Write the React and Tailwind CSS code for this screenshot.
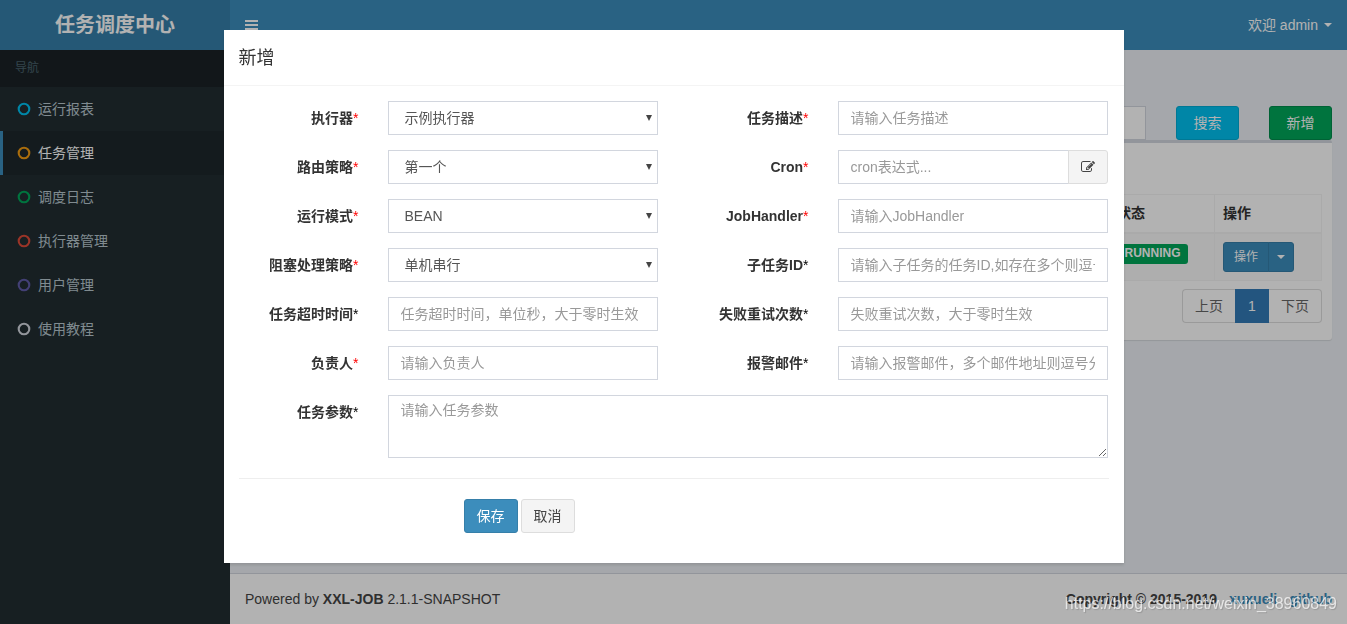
import React from 'react';

const menu = [
  { label: '运行报表', color: 'text-[#00c0ef]' },
  { label: '任务管理', color: 'text-[#f39c12]', active: true },
  { label: '调度日志', color: 'text-[#00a65a]' },
  { label: '执行器管理', color: 'text-[#dd4b39]' },
  { label: '用户管理', color: 'text-[#605ca8]' },
  { label: '使用教程', color: 'text-[#d2d6de]' },
];

const fields = [
  { id: 'jobGroup', label: '执行器', required: true, options: ['示例执行器'] },
  { id: 'jobDesc', label: '任务描述', required: true, placeholder: '请输入任务描述' },
  { id: 'routeStrategy', label: '路由策略', required: true, options: ['第一个'] },
  { id: 'jobCron', label: 'Cron', required: true, placeholder: 'cron表达式...', addon: true },
  { id: 'glueType', label: '运行模式', required: true, options: ['BEAN'] },
  { id: 'handler', label: 'JobHandler', required: true, placeholder: '请输入JobHandler' },
  { id: 'blockStrategy', label: '阻塞处理策略', required: true, options: ['单机串行'] },
  { id: 'childJobId', label: '子任务ID', placeholder: '请输入子任务的任务ID,如存在多个则逗号分隔' },
  { id: 'timeout', label: '任务超时时间', placeholder: '任务超时时间，单位秒，大于零时生效' },
  { id: 'retryCount', label: '失败重试次数', placeholder: '失败重试次数，大于零时生效' },
  { id: 'author', label: '负责人', required: true, placeholder: '请输入负责人' },
  { id: 'alarmEmail', label: '报警邮件', placeholder: '请输入报警邮件，多个邮件地址则逗号分隔' },
];

const controlClass =
  'block h-[34px] w-full min-w-0 rounded-none border border-[#d2d6de] bg-white text-sm text-[#555] outline-none placeholder:text-[#999]';

const CircleIcon = ({ className }) => (
  <svg viewBox="0 0 12 12" className={`h-3 w-3 overflow-visible ${className}`} aria-hidden="true">
    <circle cx="6" cy="6" r="5.3" fill="none" stroke="currentColor" strokeWidth="2.1" />
  </svg>
);

const BarsIcon = () => (
  <svg viewBox="0 0 13 10" className="h-[10px] w-[13px]" fill="currentColor" aria-hidden="true">
    <path d="M0 0h13v2H0zM0 4h13v2H0zM0 8h13v2H0z" />
  </svg>
);

const EditIcon = () => (
  <svg viewBox="0 0 1792 1792" className="h-3.5 w-3.5" fill="currentColor" aria-hidden="true">
    <path d="M888 1184l116-116-152-152-116 116v56h96v96h56zm440-720q-16-16-33 1l-350 350q-17 17-1 33t33-1l350-350q17-17 1-33zm80 594v190q0 119-84.5 203.5t-203.5 84.5h-832q-119 0-203.5-84.5t-84.5-203.5v-832q0-119 84.5-203.5t203.5-84.5h832q63 0 117 25 15 7 18 23 3 17-9 29l-49 49q-14 14-32 8-23-6-45-6h-832q-66 0-113 47t-47 113v832q0 66 47 113t113 47h832q66 0 113-47t47-113v-126q0-13 9-22l64-64q15-15 35-7t20 29zm-96-738l288 288-672 672h-288v-288zm444 132l-92 92-288-288 92-92q28-28 68-28t68 28l152 152q28 28 28 68t-28 68z" />
  </svg>
);

const Caret = () => (
  <svg viewBox="0 0 8 4" className="h-1 w-2" fill="currentColor" aria-hidden="true">
    <path d="M0 0h8L4 4z" />
  </svg>
);

const Star = ({ required }) => (
  <span className={required ? 'font-normal text-[#ff0000]' : 'font-normal text-black'}>*</span>
);

const Control = ({ field }) => {
  if (field.options) {
    return (
      <div className="relative">
        <select id={field.id} className={`${controlClass} appearance-none pl-4 pr-8`}>
          {field.options.map((option) => (
            <option key={option}>{option}</option>
          ))}
        </select>
        <svg
          viewBox="0 0 6 6"
          className="pointer-events-none absolute right-1.5 top-3.5 h-1.5 w-1.5"
          fill="#444"
          aria-hidden="true"
        >
          <path d="M0 0h6L3 6z" />
        </svg>
      </div>
    );
  }
  if (field.addon) {
    return (
      <div className="flex">
        <input id={field.id} type="text" placeholder={field.placeholder} className={`${controlClass} px-3`} />
        <button
          type="button"
          aria-label="编辑Cron"
          className="-ml-px flex h-[34px] w-10 shrink-0 items-center justify-center rounded-r-[3px] border border-[#ddd] bg-[#f4f4f4] text-[#444]"
        >
          <EditIcon />
        </button>
      </div>
    );
  }
  return <input id={field.id} type="text" placeholder={field.placeholder} className={`${controlClass} px-3`} />;
};

const Sidebar = () => (
  <aside className="w-[230px] shrink-0 bg-[#222d32]">
    <div className="bg-[#1a2226] px-[15px] py-2.5 text-xs leading-[17px] text-[#4b646f]">导航</div>
    <nav>
      {menu.map((item) => (
        <a
          key={item.label}
          href="#"
          className={
            item.active
              ? 'flex h-11 items-center gap-2 border-l-3 border-[#3c8dbc] bg-[#1e282c] pl-[15px] text-white'
              : 'flex h-11 items-center gap-2 border-l-3 border-transparent pl-[15px] text-[#b8c7ce]'
          }
        >
          <CircleIcon className={item.color} />
          {item.label}
        </a>
      ))}
    </nav>
  </aside>
);

const JobList = () => (
  <main className="flex-1 px-[15px] pt-14">
    <div className="flex justify-end gap-[30px]">
      <input type="text" aria-label="负责人" className="h-[34px] min-w-0 flex-1 border border-[#d2d6de] bg-white px-3" />
      <button type="button" className="h-[34px] w-[63px] rounded-[3px] border border-[#00acd6] bg-[#00c0ef] text-white">
        搜索
      </button>
      <button type="button" className="h-[34px] w-[63px] rounded-[3px] border border-[#008d4c] bg-[#00a65a] text-white">
        新增
      </button>
    </div>

    <div className="rounded-[3px] border-t-3 border-[#d2d6de] bg-white px-2.5 pb-[17px] pt-[51px] shadow-[0_1px_1px_rgba(0,0,0,0.1)]">
      <table className="w-full table-fixed border-collapse text-left">
        <thead>
          <tr className="h-[38px] text-[#333]">
            <th className="border border-b-2 border-[#f4f4f4]"></th>
            <th className="w-[106px] border border-b-2 border-[#f4f4f4] px-2">状态</th>
            <th className="w-[107px] border border-b-2 border-[#f4f4f4] px-2">操作</th>
          </tr>
        </thead>
        <tbody>
          <tr className="h-12 bg-[#f9f9f9]">
            <td className="border border-[#f4f4f4]"></td>
            <td className="border border-[#f4f4f4] px-2 pt-2.5 align-top">
              <span className="block h-5 w-[71px] rounded-[3px] bg-[#00a65a] text-center text-xs font-bold leading-[18px] text-white">
                RUNNING
              </span>
            </td>
            <td className="border border-[#f4f4f4] px-2">
              <div className="flex h-[30px] text-xs text-white">
                <button type="button" className="w-[46px] rounded-l-[3px] border border-[#367fa9] bg-[#3c8dbc]">
                  操作
                </button>
                <button
                  type="button"
                  aria-label="更多操作"
                  className="-ml-px flex w-[26px] items-center justify-center rounded-r-[3px] border border-[#367fa9] bg-[#3c8dbc]"
                >
                  <Caret />
                </button>
              </div>
            </td>
          </tr>
        </tbody>
      </table>

      <div className="mt-2 flex justify-end text-[#666]">
        <button type="button" className="h-[34px] w-[53px] rounded-l border border-r-0 border-[#ddd]">
          上页
        </button>
        <button type="button" className="h-[34px] w-[34px] bg-[#337ab7] text-white">
          1
        </button>
        <button type="button" className="h-[34px] w-[53px] rounded-r border border-l-0 border-[#ddd]">
          下页
        </button>
      </div>
    </div>
  </main>
);

const AddJobModal = () => (
  <div className="fixed inset-0 overflow-y-auto bg-black/30">
    <div
      role="dialog"
      aria-labelledby="modalTitle"
      className="mx-auto mt-[30px] w-full max-w-[900px] bg-white shadow-[0_2px_3px_rgba(0,0,0,0.125)]"
    >
      <div className="border-b border-[#f4f4f4] px-[15px] pb-3.5 pt-4">
        <h4 id="modalTitle" className="text-lg leading-[25px] text-[#333]">
          新增
        </h4>
      </div>

      <form className="pb-[30px] pt-[15px]">
        <div className="grid grid-cols-12 gap-y-[15px]">
          {fields.map((field) => (
            <React.Fragment key={field.id}>
              <label htmlFor={field.id} className="col-span-2 px-[15px] pt-[7px] text-right font-bold">
                {field.label}
                <Star required={field.required} />
              </label>
              <div className="col-span-4 pl-3.5 pr-4">
                <Control field={field} />
              </div>
            </React.Fragment>
          ))}
          <label htmlFor="executorParam" className="col-span-2 px-[15px] pt-[7px] text-right font-bold">
            任务参数
            <Star />
          </label>
          <div className="col-span-10 pl-3.5 pr-4">
            <textarea
              id="executorParam"
              placeholder="请输入任务参数"
              className="block h-[63px] w-full resize-y border border-[#d2d6de] px-3 py-1 leading-5 text-[#555] outline-none placeholder:text-[#999]"
            />
          </div>
        </div>

        <hr className="mx-[15px] my-5 border-[#eee]" />

        <div className="grid grid-cols-12">
          <div className="col-span-6 col-start-4 flex gap-[3px] px-[15px]">
            <button type="button" className="h-[34px] w-[54px] rounded-[3px] border border-[#367fa9] bg-[#3c8dbc] text-white">
              保存
            </button>
            <button type="button" className="h-[34px] w-[54px] rounded-[3px] border border-[#ddd] bg-[#f4f4f4] text-[#444]">
              取消
            </button>
          </div>
        </div>
      </form>
    </div>
  </div>
);

export default function App() {
  return (
    <div className="flex min-h-screen flex-col bg-[#ecf0f5] font-['Liberation_Sans','Noto_Sans_CJK_SC',sans-serif] text-sm leading-5 text-[#333]">
      <header className="flex h-[50px] bg-[#3c8dbc] text-white">
        <a href="#" className="flex w-[230px] items-center justify-center bg-[#367fa9] text-xl font-bold">
          任务调度中心
        </a>
        <div className="flex flex-1 items-center justify-between px-[15px]">
          <button type="button" aria-label="切换导航">
            <BarsIcon />
          </button>
          <a href="#" className="flex items-center gap-1.5">
            欢迎 admin
            <Caret />
          </a>
        </div>
      </header>

      <div className="flex flex-1">
        <Sidebar />
        <div className="flex min-w-0 flex-1 flex-col">
          <JobList />
          <footer className="flex justify-between border-t border-[#d2d6de] bg-white p-[15px] text-[#444]">
            <p>
              Powered by <b>XXL-JOB</b> 2.1.1-SNAPSHOT
            </p>
            <p className="flex gap-3 font-bold">
              <span>Copyright © 2015-2019</span>
              <a href="#" className="text-[#3c8dbc]">xuxueli</a>
              <a href="#" className="text-[#3c8dbc]">github</a>
            </p>
          </footer>
        </div>
      </div>

      <AddJobModal />

      <span className="pointer-events-none fixed bottom-2 right-2.5 text-base text-white/70 [text-shadow:1px_1px_1px_rgba(0,0,0,0.15)]">
        https://blog.csdn.net/weixin_38960849
      </span>
    </div>
  );
}
